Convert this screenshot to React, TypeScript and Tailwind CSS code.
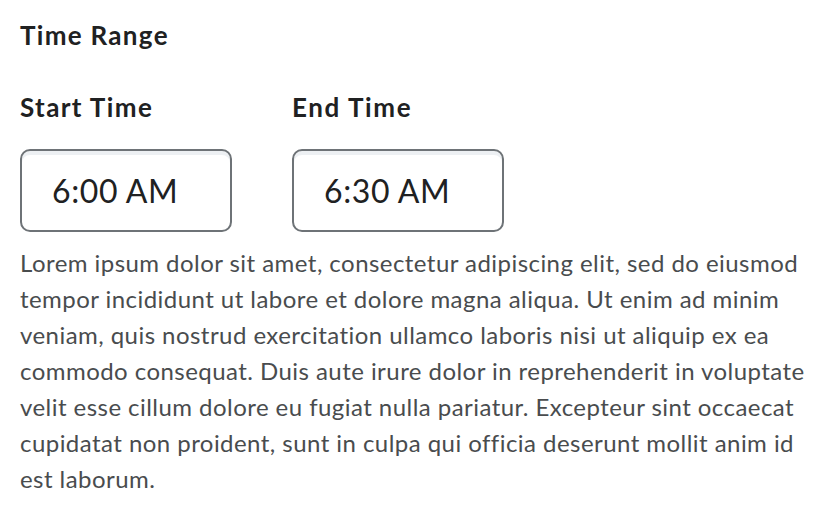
export default function App() {
  return (
    <div className="min-h-[518px] w-[840px] bg-white px-5 pt-[17px] font-['Lato','Liberation_Sans',sans-serif] [font-variant-ligatures:none]">
      <h2 className="text-[26px] font-bold leading-[36px] tracking-[1.3px] text-[#202122]">Time Range</h2>
      <div className="mt-[36px] flex gap-[60px]">
        <div className="flex flex-col">
          <label className="text-[26px] font-bold leading-[36px] tracking-[1.4px] text-[#202122]">Start Time</label>
          <div className="mt-[24px] flex h-[83px] w-[212px] items-center rounded-[10px] border-2 border-[#6e7377] pl-[30px] text-[32px] tracking-[0.6px] text-[#202122] shadow-[inset_0_4px_0_0_rgba(185,194,208,0.25)]">
            6:00 AM
          </div>
        </div>
        <div className="flex flex-col">
          <label className="text-[26px] font-bold leading-[36px] tracking-[1.6px] text-[#202122]">End Time</label>
          <div className="mt-[24px] flex h-[83px] w-[212px] items-center rounded-[10px] border-2 border-[#6e7377] pl-[30px] text-[32px] tracking-[0.6px] text-[#202122] shadow-[inset_0_4px_0_0_rgba(185,194,208,0.25)]">
            6:30 AM
          </div>
        </div>
      </div>
      <p className="mt-[13px] w-[800px] text-[24px] leading-[36px] tracking-[0.45px] text-[#494c4e]">
        Lorem ipsum dolor sit amet, consectetur adipiscing elit, sed do eiusmod tempor incididunt ut labore et dolore magna aliqua. Ut enim ad minim veniam, quis nostrud exercitation ullamco laboris nisi ut aliquip ex ea commodo consequat. Duis aute irure dolor in reprehenderit in voluptate velit esse cillum dolore eu fugiat nulla pariatur. Excepteur sint occaecat cupidatat non proident, sunt in culpa qui officia deserunt mollit anim id est laborum.
      </p>
    </div>
  );
}
